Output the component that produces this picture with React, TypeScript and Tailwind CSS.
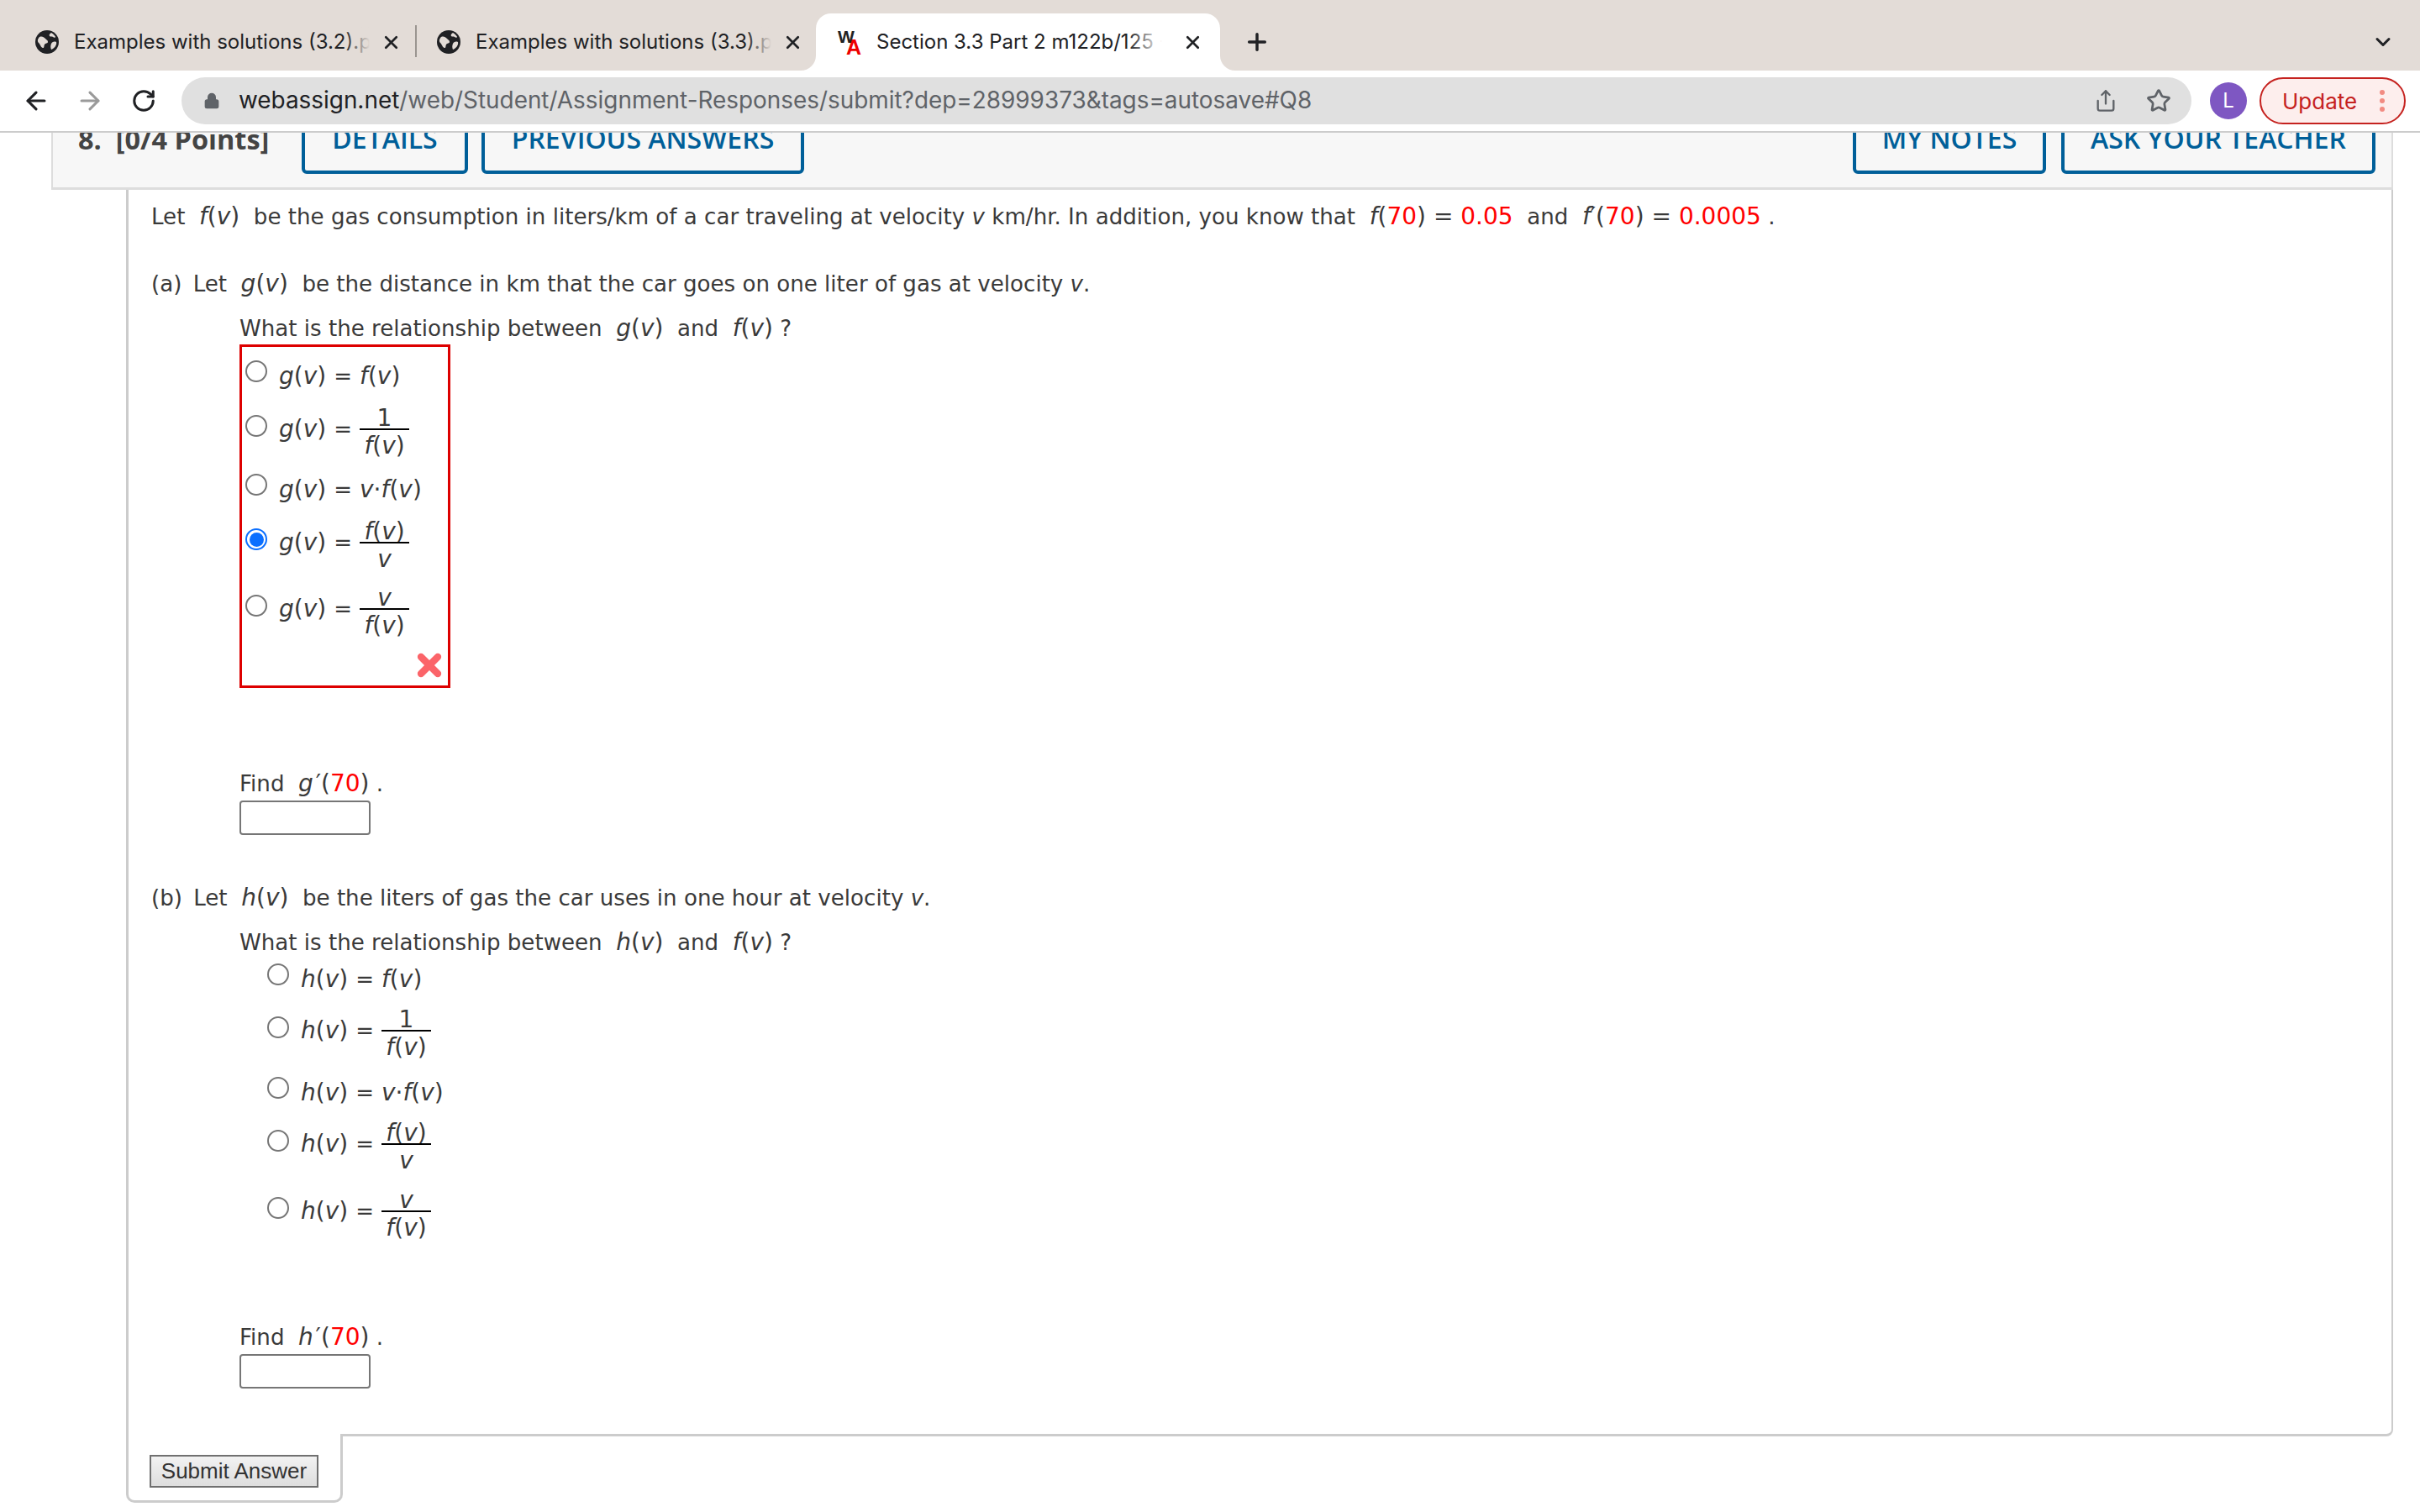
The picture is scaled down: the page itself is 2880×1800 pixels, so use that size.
import { ArrowLeft, ArrowRight, ChevronDown, Lock, Plus, RotateCw, Share, Star, X } from "lucide-react";
import type { ReactNode } from "react";

const Globe = () => (
  <svg viewBox="0 0 28 28" className="w-[28px] h-[28px] shrink-0">
    <circle cx="14" cy="14" r="14" fill="#202124" />
    <path d="M5 8c3-1 5 0 7 2s3 2 3 4-3 1-4 3 0 4-2 4-3-4-5-6-1-5 1-7z" fill="#e3dcd7" />
    <path d="M19 3c-2 1-3 3-2 4s3 0 4 1 3 1 3 0-3-4-5-5zM25 14c-3-1-5 0-6 2s-1 5 0 7c3-1 7-5 6-9z" fill="#e3dcd7" />
  </svg>
);

const Tab = ({ title, wide }: { title: string; wide: string }) => (
  <div className={`flex items-center h-[68px] pl-[42px] relative shrink-0 ${wide}`}>
    <Globe />
    <span className="relative ml-[18px] w-[352px] overflow-hidden whitespace-nowrap text-[24px] text-[#202124]">
      {title}
      <span className="absolute right-0 top-0 bottom-0 w-[30px] bg-gradient-to-r from-transparent to-[#e3dcd7]" />
    </span>
    <X className="ml-[13px] w-[25px] h-[25px] text-[#202124] shrink-0" strokeWidth={2.6} />
  </div>
);

const I = ({ children }: { children: ReactNode }) => <i className="italic">{children}</i>;
const Red = ({ children }: { children: ReactNode }) => <span className="text-[#f00]">{children}</span>;
// the math images in the page run a little bigger than the body text
const M = ({ children }: { children: ReactNode }) => <span className="text-[28px] whitespace-pre">{children}</span>;

const Fn = ({ name, arg = "v" }: { name: string; arg?: string }) => (
  <M>
    <I>{name}</I>(<I>{arg}</I>)
  </M>
);

const Frac = ({ top, bottom }: { top: ReactNode; bottom: ReactNode }) => (
  <span className="inline-flex flex-col items-center w-[59px]">
    <span className="h-[32px] leading-[39px] w-full text-center">{top}</span>
    <span className="w-full h-[2px] bg-black" />
    <span className="h-[32px] leading-[37px] w-full text-center">{bottom}</span>
  </span>
);

const Radio = ({ on, frac }: { on?: boolean; frac?: boolean }) => (
  <span
    className={`shrink-0 w-[26px] h-[26px] rounded-full border-[2px] bg-white flex items-center justify-center ${
      frac ? "-translate-y-[3px]" : "-translate-y-[5px]"
    } ${on ? "border-[#0b6fff]" : "border-[#767676]"}`}
  >
    {on && <span className="w-[17px] h-[17px] rounded-full bg-[#0b6fff]" />}
  </span>
);

const Choice = ({
  fn,
  on,
  frac,
  children,
  className,
}: {
  fn: string;
  on?: boolean;
  frac?: boolean;
  children: ReactNode;
  className: string;
}) => (
  <div className={`flex items-center ${className}`}>
    <Radio on={on} frac={frac} />
    <span className="ml-[14px] pt-[2px] flex items-center whitespace-nowrap text-[28px]">
      <Fn name={fn} />
      <span className="mx-[9px] text-[26px]">=</span>
      {children}
    </span>
  </div>
);

const Choices = ({ fn, on, gaps }: { fn: string; on?: boolean; gaps: string[] }) => (
  <>
    <Choice fn={fn} className="h-[44px]">
      <Fn name="f" />
    </Choice>
    <Choice fn={fn} frac className={`h-[70px] ${gaps[0]}`}>
      <Frac top="1" bottom={<Fn name="f" />} />
    </Choice>
    <Choice fn={fn} className={`h-[44px] ${gaps[1]}`}>
      <I>v</I>·<Fn name="f" />
    </Choice>
    <Choice fn={fn} on={on} frac className={`h-[70px] ${gaps[2]}`}>
      <Frac top={<Fn name="f" />} bottom={<I>v</I>} />
    </Choice>
    <Choice fn={fn} frac className={`h-[70px] ${gaps[3]}`}>
      <Frac top={<I>v</I>} bottom={<Fn name="f" />} />
    </Choice>
  </>
);

const HeadButton = ({ label, w }: { label: string; w: string }) => (
  <div className={`h-[70px] border-[4px] border-[#005f99] rounded-[6px] bg-[#f7f7f7] flex items-start justify-center pt-[1px] text-[32px] leading-[46px] font-semibold text-[#005f99] ${w}`}>
    {label}
  </div>
);

export default function App() {
  return (
    <div className="relative w-[2880px] h-[1800px] overflow-hidden bg-white font-['Inter',sans-serif]">
      <div className="relative z-10 h-[84px] bg-[#e3dcd7] flex items-end">
        <Tab title="Examples with solutions (3.2).pdf" wide="w-[494px]" />
        <div className="w-[2px] h-[38px] bg-[#9a9590] mb-[16px] shrink-0" />
        <Tab title="Examples with solutions (3.3).pdf" wide="w-[478px] -ml-[18px]" />
        <div className="relative w-[481px] h-[68px] ml-[15px] shrink-0 bg-white rounded-t-[18px] flex items-center pl-[26px]">
          <span className="absolute -left-[18px] bottom-0 w-[18px] h-[18px] bg-white">
            <span className="block w-full h-full bg-[#e3dcd7] rounded-br-[18px]" />
          </span>
          <span className="absolute -right-[18px] bottom-0 w-[18px] h-[18px] bg-white">
            <span className="block w-full h-full bg-[#e3dcd7] rounded-bl-[18px]" />
          </span>
          <span className="relative w-[30px] h-[30px] shrink-0 font-['Liberation_Sans',sans-serif] font-bold leading-none">
            <span className="absolute left-0 -top-[2px] text-[21px] text-[#222]">W</span>
            <span className="absolute left-[10px] top-[9px] text-[25px] text-[#e00]">A</span>
          </span>
          <span className="relative ml-[16px] w-[340px] overflow-hidden whitespace-nowrap text-[24px] text-[#202124]">
            Section 3.3 Part 2 m122b/125 - Fall
            <span className="absolute right-0 top-0 bottom-0 w-[40px] bg-gradient-to-r from-transparent to-white" />
          </span>
          <X className="ml-[24px] w-[25px] h-[25px] text-[#202124] shrink-0" strokeWidth={2.6} />
        </div>
        <div className="flex items-center h-[68px] ml-[28px]">
          <Plus className="w-[32px] h-[32px] text-[#202124]" strokeWidth={2.6} />
        </div>
        <div className="flex items-center h-[68px] ml-auto mr-[30px]">
          <ChevronDown className="w-[28px] h-[28px] text-[#202124]" strokeWidth={2.6} />
        </div>
      </div>

      <div className="relative z-10 h-[74px] bg-white border-b-[2px] border-[#ccc] flex items-center">
        <ArrowLeft className="ml-[26px] w-[34px] h-[34px] text-[#202124]" strokeWidth={2.2} />
        <ArrowRight className="ml-[30px] w-[34px] h-[34px] text-[#9a9a9a]" strokeWidth={2.2} />
        <RotateCw className="ml-[32px] w-[30px] h-[30px] text-[#202124]" strokeWidth={2.4} />
        <div className="ml-[30px] w-[2392px] h-[56px] rounded-full bg-[#e0e0e0] flex items-center pl-[26px]">
          <Lock className="w-[20px] h-[22px] text-[#5f6368] fill-[#5f6368]" strokeWidth={2} />
          <span className="ml-[22px] text-[27.9px] text-[#5f6368] whitespace-nowrap">
            <span className="text-[#202124]">webassign.net</span>/web/Student/Assignment-Responses/submit?dep=28999373&amp;tags=autosave#Q8
          </span>
          <Share className="ml-auto w-[28px] h-[32px] text-[#5f6368]" strokeWidth={2} />
          <Star className="ml-[34px] mr-[24px] w-[30px] h-[30px] text-[#5f6368]" strokeWidth={2.2} />
        </div>
        <div className="ml-[22px] w-[44px] h-[44px] rounded-full bg-[#7e57c2] text-white text-[24px] flex items-center justify-center">L</div>
        <div className="ml-[15px] w-[174px] h-[56px] rounded-full border-[2px] border-[#c5221f] bg-[#fdeeed] flex items-center pl-[25px]">
          <span className="text-[26px] text-[#c5221f]">Update</span>
          <span className="ml-[27px] flex flex-col gap-[4px]">
            <span className="w-[6px] h-[6px] rounded-full bg-[#f28b82]" />
            <span className="w-[6px] h-[6px] rounded-full bg-[#f28b82]" />
            <span className="w-[6px] h-[6px] rounded-full bg-[#f28b82]" />
          </span>
        </div>
      </div>

      <div className="ml-[61px] mr-[32px] h-[68px] bg-[#f7f7f7] border-l-[2px] border-r-[2px] border-b-[3px] border-[#ddd] overflow-hidden font-['Open_Sans',sans-serif]">
        <div className="flex items-start h-[70px] -mt-[21px] pl-[30px] pr-[19px]">
          <span className="pt-[6px] text-[32.5px] leading-[46px] font-bold text-[#444] whitespace-pre w-[266px]">8.  [0/4 Points]</span>
          <HeadButton label="DETAILS" w="w-[198px]" />
          <div className="w-[16px]" />
          <HeadButton label="PREVIOUS ANSWERS" w="w-[384px]" />
          <div className="ml-auto w-[230px]">
            <HeadButton label="MY NOTES" w="w-full" />
          </div>
          <div className="w-[18px]" />
          <HeadButton label="ASK YOUR TEACHER" w="w-[374px]" />
        </div>
      </div>

      <div className="ml-[150px] mr-[32px] h-[1484px] border-l-[3px] border-r-[2px] border-b-[3px] border-[#ccc] rounded-br-[8px] pl-[27px] pt-[10px] font-['DejaVu_Sans',sans-serif] text-[#3a3a3a] text-[26.1px] leading-[44px] whitespace-nowrap">
        <p className="whitespace-pre">
          Let  <Fn name="f" />  be the gas consumption in liters/km of a car traveling at velocity <I>v</I> km/hr. In addition, you know that  <M><I>f</I>(<Red>70</Red>) = <Red>0.05</Red></M>  and  <M><I>f</I>′(<Red>70</Red>) = <Red>0.0005</Red></M> .
        </p>
        <p className="mt-[36px] whitespace-pre">
          <span className="mr-[5px]">(a)</span> Let  <Fn name="g" />  be the distance in km that the car goes on one liter of gas at velocity <I>v</I>.
        </p>
        <div className="ml-[105px]">
          <p className="mt-[9px] whitespace-pre">
            What is the relationship between  <Fn name="g" />  and  <Fn name="f" /> ?
          </p>
          <div className="relative w-[251px] h-[409px] -mt-[3px] border-[3px] border-[#d00] pl-[4px] pt-[12px]">
            <Choices fn="g" on gaps={["mt-[6px]", "mt-[15px]", "mt-[6px]", "mt-[9px]"]} />
            <X className="absolute right-[2px] bottom-[4px] w-[40px] h-[40px] text-[#fb6469]" strokeWidth={5} />
          </div>
          <p className="mt-[92px] whitespace-pre">
            Find  <M><I>g</I>{"\u200a"}′(<Red>70</Red>)</M> .
          </p>
          <div className="w-[156px] h-[41px] -mt-[2px] border-[2px] border-[#767676] rounded-[4px]" />
        </div>
        <p className="mt-[53px] whitespace-pre">
          <span className="mr-[5px]">(b)</span> Let  <Fn name="h" />  be the liters of gas the car uses in one hour at velocity <I>v</I>.
        </p>
        <div className="ml-[105px]">
          <p className="mt-[9px] whitespace-pre">
            What is the relationship between  <Fn name="h" />  and  <Fn name="f" /> ?
          </p>
          <div className="pl-[33px] w-[290px] -mt-[1px]">
            <Choices fn="h" gaps={["mt-[4px]", "mt-[17px]", "mt-[4px]", "mt-[10px]"]} />
          </div>
          <p className="mt-[94px] whitespace-pre">
            Find  <M><I>h</I>{"\u200a"}′(<Red>70</Red>)</M> .
          </p>
          <div className="w-[156px] h-[41px] -mt-[2px] border-[2px] border-[#767676] rounded-[4px]" />
        </div>
      </div>

      <div className="relative ml-[150px] w-[258px] h-[82px] -mt-[3px] bg-white border-l-[3px] border-r-[3px] border-b-[3px] border-[#ccc] rounded-b-[10px] pl-[25px] pt-[25px]">
        <div className="w-[201px] h-[39px] border-[2px] border-[#707070] bg-gradient-to-b from-[#f2f2f2] to-[#dedede] flex items-center justify-center font-['Liberation_Sans',sans-serif] text-[26px] text-[#333]">
          Submit Answer
        </div>
      </div>
    </div>
  );
}
